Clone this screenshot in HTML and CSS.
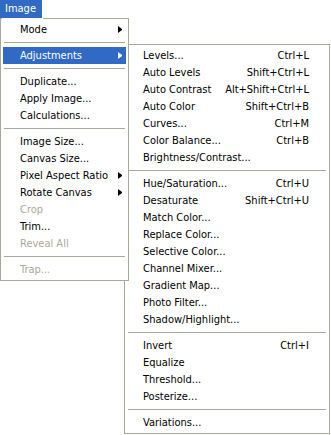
FILE: index.html
```html
<!DOCTYPE html>
<html lang="en">

<head>
    <meta charset="UTF-8">
    <meta name="viewport" content="width=device-width, initial-scale=1.0">
    <title>Image menu</title>
    <link rel="stylesheet" href="styles.css">
</head>

<body>
    <div class="menubar_item">Image</div>
    <div class="menus">
        <ul class="menu menu_main">
            <li class="item">Mode<span class="arrow"></span></li>
            <li class="sep"></li>
            <li class="item active">Adjustments<span class="arrow"></span></li>
            <li class="sep"></li>
            <li class="item">Duplicate...</li>
            <li class="item">Apply Image...</li>
            <li class="item">Calculations...</li>
            <li class="sep"></li>
            <li class="item">Image Size...</li>
            <li class="item">Canvas Size...</li>
            <li class="item">Pixel Aspect Ratio<span class="arrow"></span></li>
            <li class="item">Rotate Canvas<span class="arrow"></span></li>
            <li class="item disabled">Crop</li>
            <li class="item">Trim...</li>
            <li class="item disabled">Reveal All</li>
            <li class="sep"></li>
            <li class="item disabled">Trap...</li>
        </ul>

        <ul class="menu menu_sub">
            <li class="item">Levels...<span class="key">Ctrl+L</span></li>
            <li class="item">Auto Levels<span class="key">Shift+Ctrl+L</span></li>
            <li class="item">Auto Contrast<span class="key">Alt+Shift+Ctrl+L</span></li>
            <li class="item">Auto Color<span class="key">Shift+Ctrl+B</span></li>
            <li class="item">Curves...<span class="key">Ctrl+M</span></li>
            <li class="item">Color Balance...<span class="key">Ctrl+B</span></li>
            <li class="item">Brightness/Contrast...</li>
            <li class="sep"></li>
            <li class="item">Hue/Saturation...<span class="key">Ctrl+U</span></li>
            <li class="item">Desaturate<span class="key">Shift+Ctrl+U</span></li>
            <li class="item">Match Color...</li>
            <li class="item">Replace Color...</li>
            <li class="item">Selective Color...</li>
            <li class="item">Channel Mixer...</li>
            <li class="item">Gradient Map...</li>
            <li class="item">Photo Filter...</li>
            <li class="item">Shadow/Highlight...</li>
            <li class="sep"></li>
            <li class="item">Invert<span class="key">Ctrl+I</span></li>
            <li class="item">Equalize</li>
            <li class="item">Threshold...</li>
            <li class="item">Posterize...</li>
            <li class="sep"></li>
            <li class="item">Variations...</li>
        </ul>
    </div>
</body>

</html>
```

FILE: styles.css
```css
body {
    margin: 0;
    background: #fff;
    font: normal 11px "DejaVu Sans Condensed", "DejaVu Sans", sans-serif;
    color: #000;
}

.menubar_item {
    width: 37px;
    height: 18px;
    line-height: 18px;
    padding-left: 5px;
    background: #316ac5;
    color: #fff;
}

.menus {
    display: flex;
    align-items: flex-start;
}

.menu {
    list-style: none;
    margin: 0;
    padding: 2px;
    background: #fff;
    border: 1px solid #aca899;
}

.menu_main {
    position: relative;
    width: 123px;
}

/* the open menu joins the blue title, no line under it */
.menu_main::before {
    content: "";
    position: absolute;
    top: -1px;
    left: 1px;
    width: 41px;
    height: 1px;
    background: #fff;
}

.menu_sub {
    width: 200px;
    margin: 26px 0 0 -5px;
}

.item {
    display: flex;
    align-items: center;
    height: 17px;
    padding-left: 17px;
    white-space: nowrap;
}

.menu_sub .item {
    padding-left: 16px;
}

.key {
    margin-left: auto;
    margin-right: 18px;
}

.arrow {
    margin-left: auto;
    margin-right: 4px;
    width: 0;
    height: 1px;
    border-left: 4px solid #000;
    border-top: 3px solid transparent;
    border-bottom: 3px solid transparent;
}

.active {
    background: #316ac5;
    color: #fff;
}

.active .arrow {
    border-left-color: #fff;
}

.disabled {
    color: #aca899;
}

.sep {
    height: 1px;
    margin: 4px 1px;
    background: #aca899;
}
```
